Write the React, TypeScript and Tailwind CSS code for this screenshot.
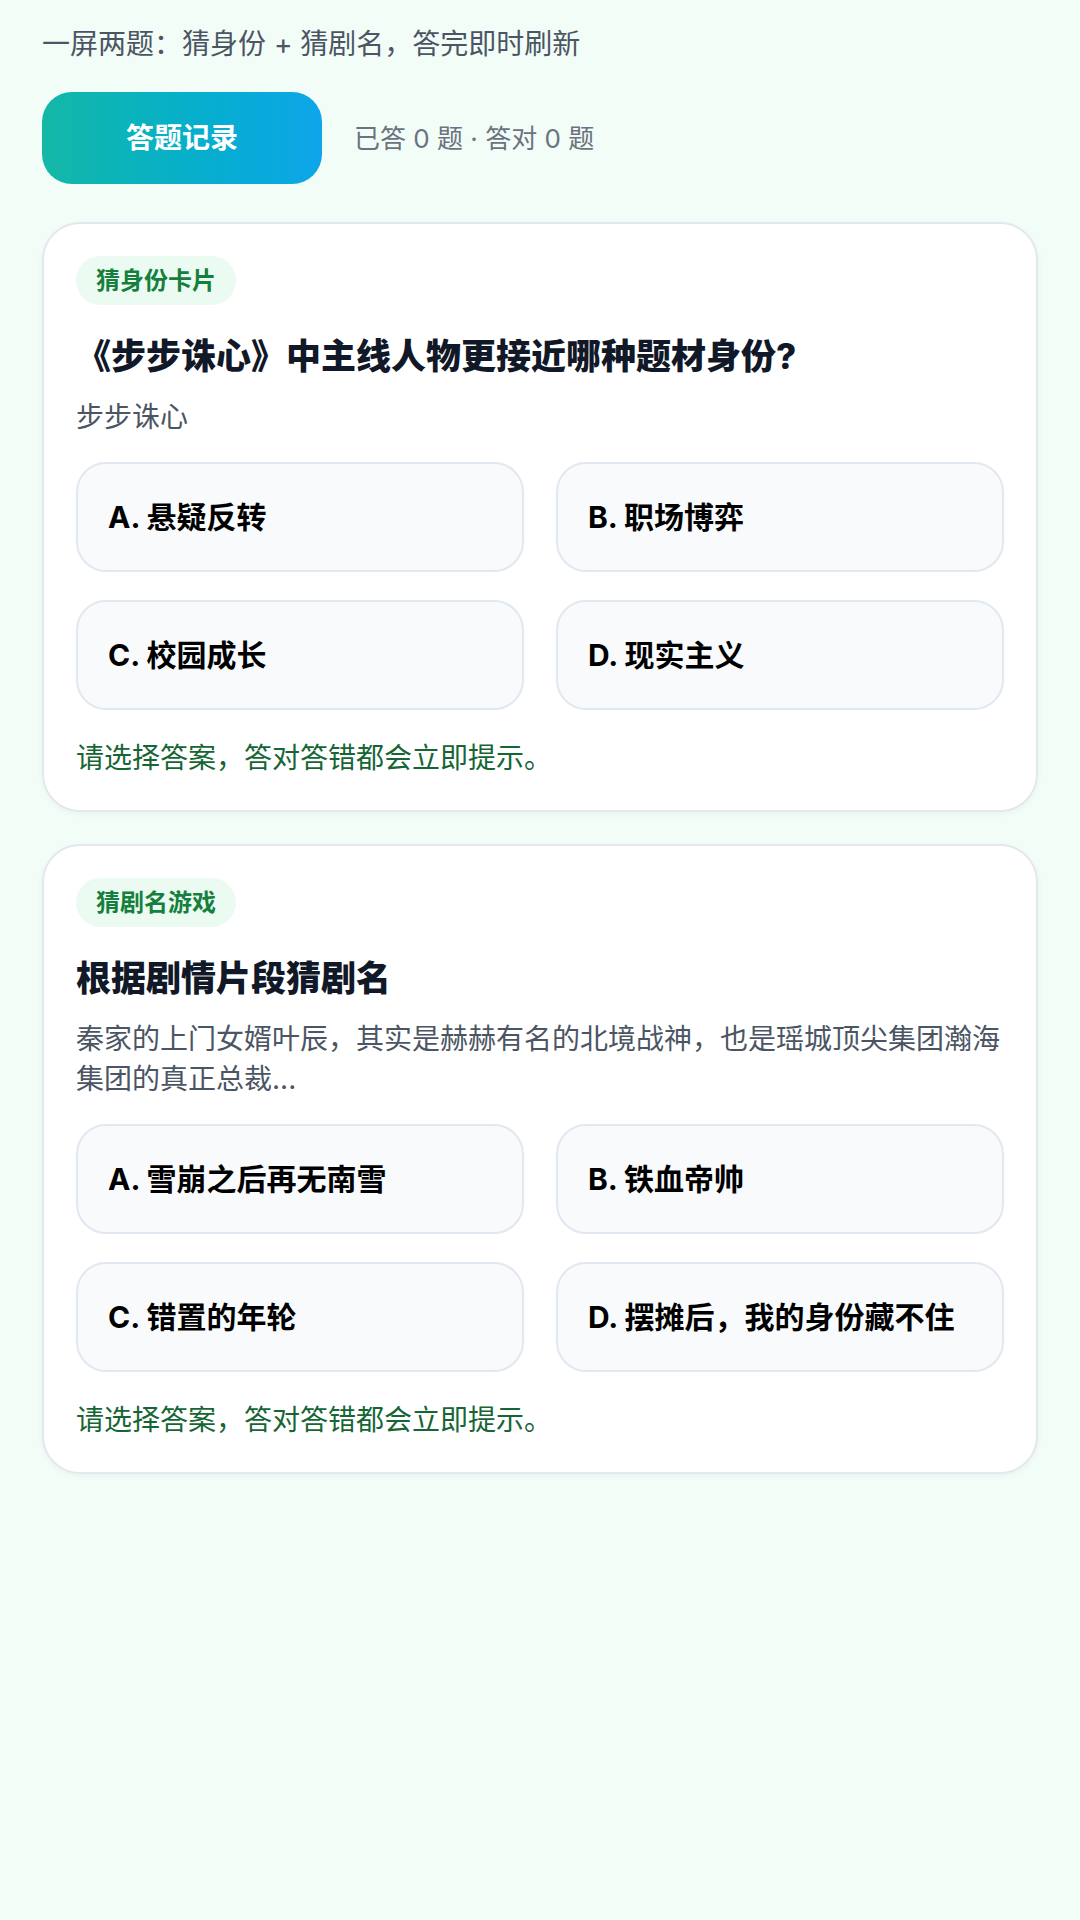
type Question = {
  tag: string;
  title: string;
  desc: string;
  options: string[];
};

const questions: Question[] = [
  {
    tag: "猜身份卡片",
    title: "《步步诛心》中主线人物更接近哪种题材身份?",
    desc: "步步诛心",
    options: ["A. 悬疑反转", "B. 职场博弈", "C. 校园成长", "D. 现实主义"],
  },
  {
    tag: "猜剧名游戏",
    title: "根据剧情片段猜剧名",
    desc: "秦家的上门女婿叶辰，其实是赫赫有名的北境战神，也是瑶城顶尖集团瀚海集团的真正总裁...",
    options: [
      "A. 雪崩之后再无南雪",
      "B. 铁血帝帅",
      "C. 错置的年轮",
      "D. 摆摊后，我的身份藏不住",
    ],
  },
];

function QuestionCard({ q }: { q: Question }) {
  return (
    <div className="rounded-[38px] border-2 border-[#e3e8ec] bg-white p-8 shadow-[0_2px_6px_rgba(15,23,42,0.04)]">
      {/* Tag */}
      <span className="inline-flex h-[49px] items-center rounded-full bg-[#ecfbf2] px-[20px] text-[24px] font-bold text-[#15803d]">
        {q.tag}
      </span>

      <h2 className="mt-[27px] text-[35px] font-extrabold leading-[48px] text-[#111827]">
        {q.title}
      </h2>

      <p className="mt-[17px] text-[28px] leading-[40px] text-[#4b5563]">
        {q.desc}
      </p>

      {/* Options */}
      <div className="mt-[25px] grid grid-cols-2 gap-x-8 gap-y-7">
        {q.options.map((opt) => (
          <button
            key={opt}
            className="rounded-[30px] border-2 border-[#e2e8f0] bg-[#f8fafc] px-[30px] py-[33px] text-left text-[30px] font-bold leading-[40px] text-black"
          >
            {opt}
          </button>
        ))}
      </div>

      <p className="mt-[28px] text-[28px] leading-[40px] text-[#166534]">
        请选择答案，答对答错都会立即提示。
      </p>
    </div>
  );
}

export default function App() {
  return (
    <div
      className="min-h-[1920px] bg-[#f2fdf7] px-[42px] pt-6"
      style={{ fontFamily: "Inter, 'Noto Sans CJK SC', sans-serif" }}
    >
      <p className="text-[28px] leading-[40px] text-[#4b5563]">
        一屏两题：猜身份 + 猜剧名，答完即时刷新
      </p>

      <div className="mt-[28px] flex items-center gap-8">
        <button className="h-[92px] w-[280px] rounded-[30px] bg-gradient-to-r from-[#14b8a6] to-[#0ea5e9] text-[28px] font-bold text-white">
          答题记录
        </button>
        <span className="text-[26px] text-[#6b7280]">已答 0 题 · 答对 0 题</span>
      </div>

      <div className="mt-[38px] flex flex-col gap-8">
        {questions.map((q) => (
          <QuestionCard key={q.tag} q={q} />
        ))}
      </div>
    </div>
  );
}
